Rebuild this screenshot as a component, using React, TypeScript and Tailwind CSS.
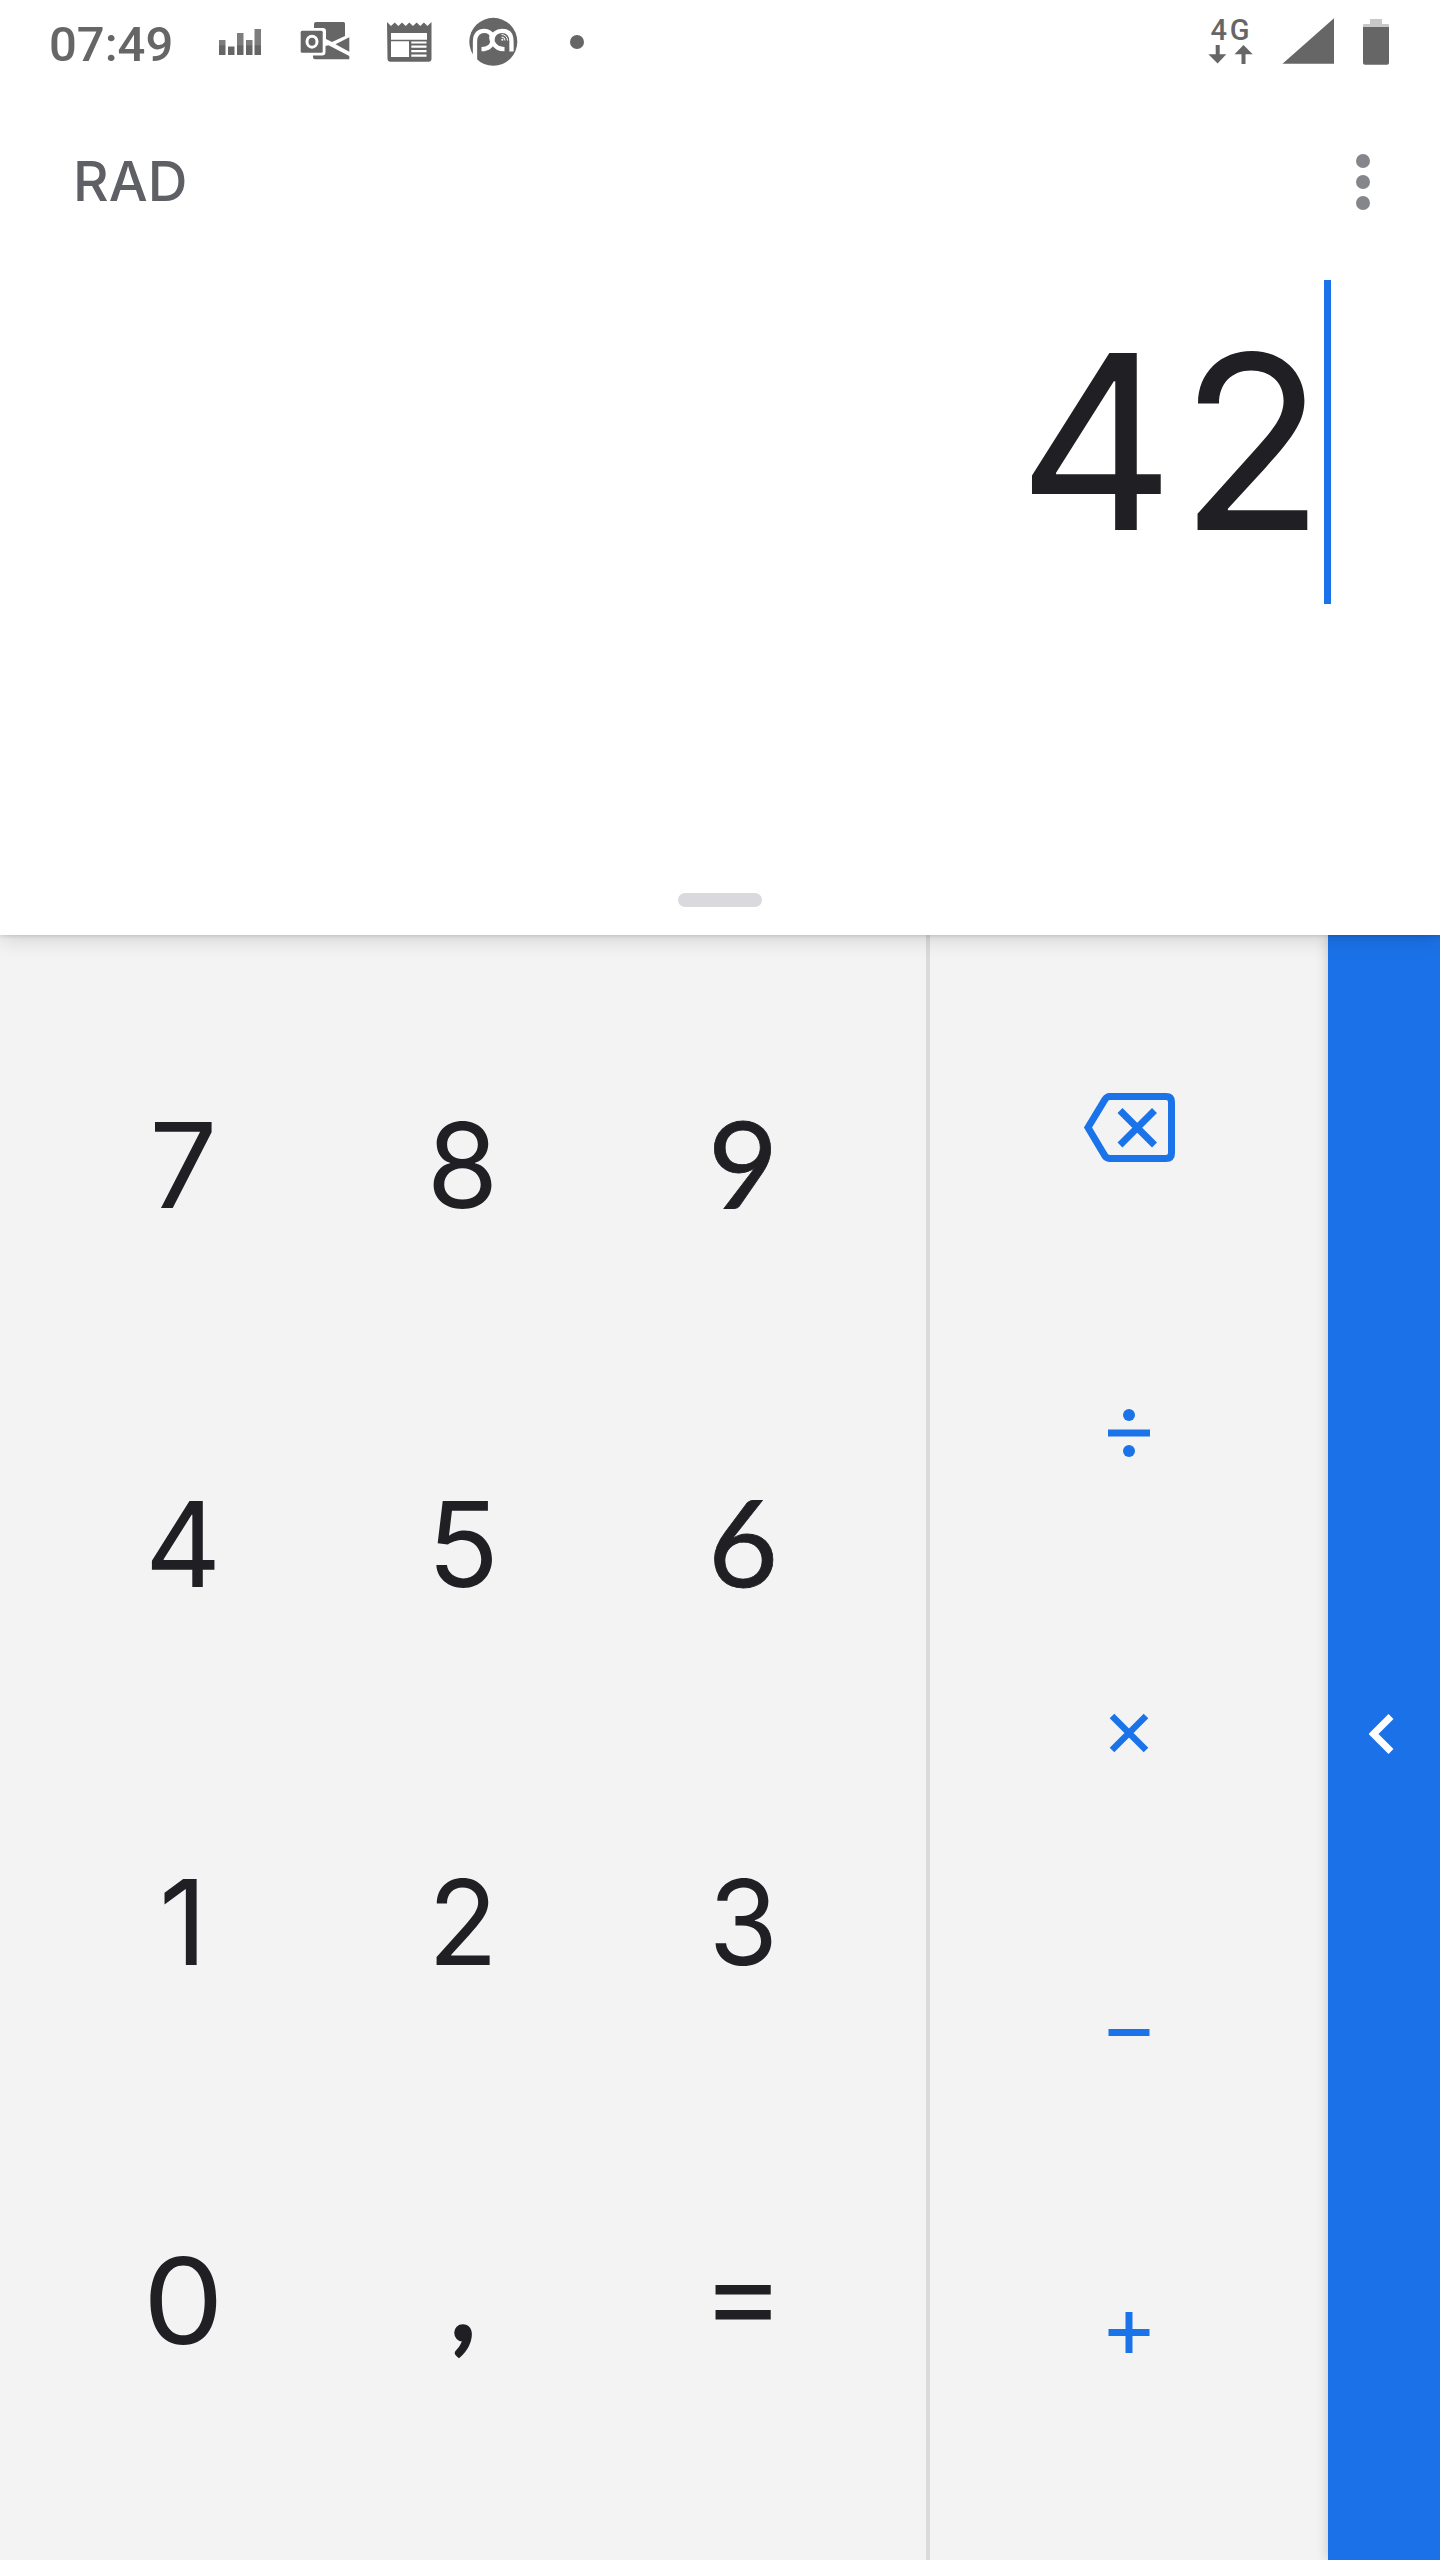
import type { ReactNode } from 'react';

const GREY = '#666666';

function StatusBar() {
  return (
    <div className="flex h-[84px] items-start justify-between pl-[50px] pr-[51px] text-[#666666]">
      <div className="flex h-[84px] items-start">
        <span className="-ml-px w-[170px] font-['Roboto'] text-[49px] leading-[89px] font-medium">
          07:49
        </span>
        <svg className="h-[84px] w-[42px]" viewBox="219 0 42 84">
          <defs>
            <linearGradient id="bars" x1="0" y1="29" x2="0" y2="55" gradientUnits="userSpaceOnUse">
              <stop offset="0.62" stopColor="#7d7d7d" />
              <stop offset="0.64" stopColor={GREY} />
            </linearGradient>
          </defs>
          <path
            fill="url(#bars)"
            d="M219 40h6.5v15H219zM228 46.5h6.5V55H228zM237 33h6.5v22H237zM246 40h6.5v15H246zM254.5 29h6.5v26h-6.5z"
          />
        </svg>
        {/* Mail */}
        <svg className="ml-[39px] h-[84px] w-[50px]" viewBox="300 0 50 84">
          <path fill={GREY} d="M314 24a2 2 0 0 1 2-2h27.5a1.5 1.5 0 0 1 1.5 1.500V36l-13 6-6-3V31a3 3 0 0 0-3-3H314z" />
          <path fill={GREY} d="M335.500 44.300l13.800-7v14.400z" />
          <path fill={GREY} d="M313 55.500h9a3.500 3.500 0 0 0 3.500-3.500v-6l3-.8L349.300 56v3.300H315a2 2 0 0 1-2-2z" />
          <rect x="300.700" y="30.800" width="22" height="21.900" rx="1.500" fill={GREY} />
          <ellipse cx="312" cy="41.700" rx="5" ry="5.500" fill="none" stroke="#fff" strokeWidth="3" />
        </svg>
        {/* News */}
        <svg className="ml-[36px] h-[84px] w-[46px]" viewBox="386 0 46 84">
          <path
            fill={GREY}
            d="M387 22l4 4 3.700-3.500 3.700 3.500 3.600-3.500 3.700 3.500 3.600-3.500 3.700 3.500 3.600-3.500 3.700 3.500 3.600-3.500 3.600 3.500 4-4v36.700a3 3 0 0 1-3 3h-38a3 3 0 0 1-3-3z"
          />
          <path
            fill="#fff"
            d="M391 33h36v6.700h-36zM391 41.300h18V57h-18zM411.300 41.500h15.200v2h-15.200zM411.300 45.600h15.200v2.200h-15.200zM411.300 50h15.200v2.200h-15.200zM411.300 54.500h15.200v2.300h-15.200z"
          />
        </svg>
        {/* Circle emblem */}
        <svg className="ml-[37px] h-[84px] w-[50px]" viewBox="469 0 50 84">
          <circle cx="493.300" cy="41.800" r="24" fill={GREY} />
          <g fill="none" stroke="#fff" strokeWidth="4.300">
            <path d="M475 60V41.500C475 34 479 30.800 484.500 30.800C489.500 30.800 492 34 494 37.500M511.500 51.500V41.500C511.500 34 508 30.800 502 30.800C497 30.800 492.500 34 492.500 40C492.500 46 488 49.200 481.500 49.200" />
            <path d="M492.500 32.500C489.500 38 493 49.200 504.500 49.200" />
          </g>
          <g fill="none" stroke="#fff" strokeWidth="1">
            <path d="M501.500 34.500a6 6 0 0 1 6 6M501.500 37a3.500 3.500 0 0 1 3.500 3.500" />
          </g>
          <circle cx="502.300" cy="39.800" r="1" fill="#fff" />
        </svg>
        <span className="mt-[35px] ml-[51px] size-[14px] rounded-full bg-[#666666]" />
      </div>
      <div className="flex h-[84px] items-start">
        <div className="flex w-[46px] flex-col items-center">
          <span className="mt-[15px] h-[30px] pl-px font-['Roboto'] text-[29px] leading-[30px] font-medium tracking-[3px]">4G</span>
          <svg className="h-[20px] w-[46px]" viewBox="1208 45 46 20">
            <path fill={GREY} d="M1215.700 45h4v9.300h6.600l-8.700 9.200-9.200-9.200h7.300zM1243.500 45l9.200 9.300h-7.200V64h-4v-9.700h-7z" />
          </svg>
        </div>
        <svg className="ml-[28px] h-[84px] w-[52px]" viewBox="1282 0 52 84">
          <path fill={GREY} d="M1282.500 63.800L1334 18.300v45.500z" />
        </svg>
        <svg className="ml-[29px] h-[84px] w-[26px]" viewBox="1363 0 26 84">
          <path fill="#c8c8c8" d="M1370 24v-5h12v5h6a1 1 0 0 1 1 1v4h-26v-4a1 1 0 0 1 1-1z" />
          <path fill={GREY} d="M1363 27h26v35.800a2 2 0 0 1-2 2h-22a2 2 0 0 1-2-2z" />
        </svg>
      </div>
    </div>
  );
}

function Display() {
  return (
    <section className="relative z-20 flex h-[935px] flex-col bg-white shadow-[0_1px_4px_rgba(0,0,0,0.14),0_4px_20px_rgba(0,0,0,0.14)]">
      <StatusBar />
      <div className="flex h-[196px] items-start justify-between pr-[70px] pl-[73px]">
        <span className="text-[55px] leading-[194px] font-medium text-[#5f6065]">RAD</span>
        <button className="mt-[70px] flex flex-col gap-[7px]" aria-label="More options">
          <i className="size-[14px] rounded-full bg-[#85868c]" />
          <i className="size-[14px] rounded-full bg-[#85868c]" />
          <i className="size-[14px] rounded-full bg-[#85868c]" />
        </button>
      </div>
      <div className="flex h-[324px] justify-end pr-[109px]">
        <span className="text-[243px] leading-[324px] text-[#202024]">
          <span className="mr-px">4</span>
          <span className="inline-block origin-right scale-x-[0.975]">2</span>
        </span>
        <span className="w-[7px] bg-[#1a73e8]" />
      </div>
      <span className="mx-auto mt-auto mb-[28px] h-[14px] w-[84px] rounded-full bg-[#dadade]" />
    </section>
  );
}

const digits: { label: string; style: string }[] = [
  { label: '7', style: 'inline-block scale-x-[1.02]' },
  { label: '8', style: 'inline-block scale-x-[0.98]' },
  {
    label: '9',
    style: "inline-block -translate-y-[3px] font-['Lato',sans-serif] text-[121px] [-webkit-text-stroke:0.8px_#202024]",
  },
  { label: '4', style: 'inline-block' },
  { label: '5', style: 'inline-block' },
  {
    label: '6',
    style: "inline-block -translate-y-[3px] font-['Lato',sans-serif] text-[121px] [-webkit-text-stroke:0.8px_#202024]",
  },
  { label: '1', style: 'inline-block' },
  { label: '2', style: 'inline-block scale-x-[0.97]' },
  { label: '3', style: 'inline-block scale-x-[0.95]' },
  { label: '0', style: 'inline-block scale-x-[1.09] scale-y-[1.01]' },
  {
    label: ',',
    style: "inline-block -translate-y-[7px] font-['Lato',sans-serif] text-[121px] [-webkit-text-stroke:3px_#202024]",
  },
  { label: '=', style: 'inline-block -translate-y-[8px] scale-x-[1.06]' },
];

function Glyph({ children }: { children: ReactNode }) {
  return (
    <svg className="h-[100px] w-[100px] overflow-visible" viewBox="-50 -50 100 100" fill="none" stroke="#1a73e8" strokeWidth="7">
      {children}
    </svg>
  );
}

const operators: { name: string; icon: ReactNode }[] = [
  {
    name: 'delete',
    icon: (
      <>
        <path d="M-19.500-36.500H37Q42.500-36.500 42.500-31V20Q42.500 25.500 37 25.500H-19Q-22 25.500-24 23L-41-5.500-24-33.500Q-22-36.500-19.500-36.500Z" />
        <path d="M-9-22.500L25.500 12M25.500-22.500L-9 12" />
      </>
    ),
  },
  {
    name: 'divide',
    icon: (
      <>
        <path d="M-21 0H21" />
        <circle cy="-18" r="6" fill="#1a73e8" stroke="none" />
        <circle cy="18" r="6" fill="#1a73e8" stroke="none" />
      </>
    ),
  },
  { name: 'multiply', icon: <path strokeWidth="6.500" d="M-17-17L17 17M17-17L-17 17" /> },
  { name: 'subtract', icon: <path d="M-20.500-.5H20.500" /> },
  { name: 'add', icon: <path d="M-20.500-.5H20.500M0-21V20" /> },
];

export default function App() {
  return (
    <main className="flex h-[2560px] w-[1440px] flex-col overflow-hidden bg-[#f3f3f4] font-['Inter',sans-serif]">
      <Display />
      <div className="flex flex-1">
        <section className="grid w-[930px] grid-cols-3 grid-rows-[repeat(4,378.5px)] border-r-4 border-[#dadade] pt-[41px] pr-[43px] pl-[43px]">
          {digits.map((d) => (
            <button key={d.label} className="h-[378px] overflow-hidden text-center text-[118px] leading-[378px] text-[#202024]">
              <span className={d.style}>{d.label}</span>
            </button>
          ))}
        </section>
        <section className="flex flex-1 flex-col pt-[48px]">
          {operators.map((o) => (
            <button key={o.name} aria-label={o.name} className="flex h-[300px] items-center justify-center">
              <Glyph>{o.icon}</Glyph>
            </button>
          ))}
        </section>
        <aside className="relative z-10 w-[112px] bg-[#1b72e8] pt-[779px] pl-[41px] shadow-[0_0_12px_rgba(0,0,0,0.2)]">
          <svg className="h-[40px] w-[26px]" viewBox="0 0 26 40" fill="none" stroke="#fff" strokeWidth="7">
            <path d="M22 2.500L4.500 20 22 37.500" />
          </svg>
        </aside>
      </div>
    </main>
  );
}
